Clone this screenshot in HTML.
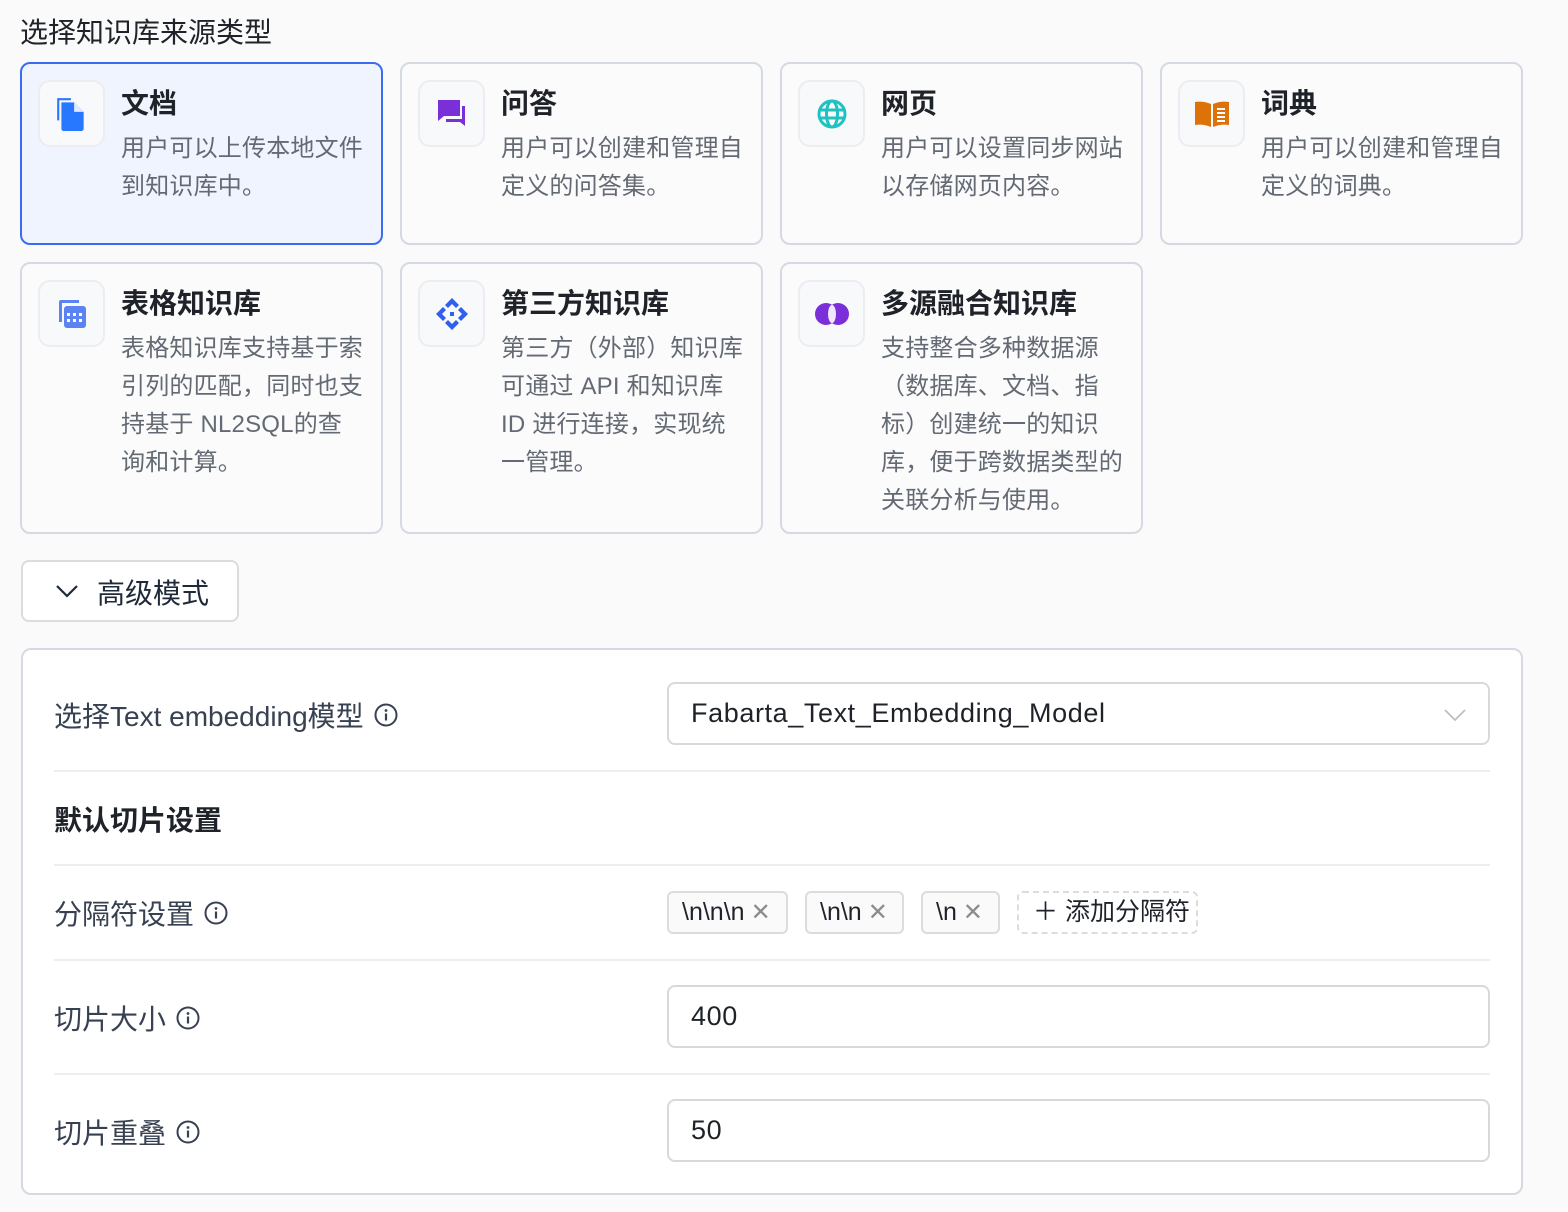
<!DOCTYPE html>
<html><head><meta charset="utf-8">
<style>
*{box-sizing:border-box;margin:0;padding:0}
body{width:1568px;height:1212px;background:#fafafa;font-family:"Liberation Sans","Noto Sans CJK SC",sans-serif;position:relative;overflow:hidden;color:#1f2329}
.h{position:absolute;left:20px;top:11px;font-size:28px;color:#1f2329}
.card{position:absolute;width:363px;border:2px solid #d5d9e2;border-radius:10px;background:#fbfbfc}
.card.sel{border-color:#3a6cf0;background:#f0f4ff}
.ib{position:absolute;left:16px;top:16px;width:67px;height:67px;border:2px solid #ebedf0;border-radius:12px;background:#f8f9fb;display:flex;align-items:center;justify-content:center}
.t{position:absolute;left:99px;top:18px;font-size:28px;font-weight:bold;color:#1f2329}
.d{position:absolute;left:99px;top:66px;width:260px;font-size:24px;line-height:38px;color:#646a73;white-space:nowrap;letter-spacing:0.2px}
.adv{position:absolute;left:21px;top:560px;width:218px;height:62px;border:2px solid #dcdcdc;border-radius:8px;background:#fff;font-size:28px;color:#1f2937}
.panel{position:absolute;left:21px;top:648px;width:1502px;height:547px;border:2px solid #d5d9e2;border-radius:10px;background:#fff}
.lbl{position:absolute;left:31px;font-size:28px;color:#374151;display:flex;align-items:center;gap:10px}
.div{position:absolute;left:31px;width:1436px;height:2px;background:#eceef2}
.inp{position:absolute;left:644px;width:823px;height:63px;border:2px solid #d9d9d9;border-radius:8px;font-size:27px;letter-spacing:0.6px;padding-left:22px;line-height:59px;color:#1f2329}
.tag{position:absolute;top:241px;height:43px;border:2px solid #dcdcdc;border-radius:6px;background:#fafafa;font-size:25px;line-height:39px;padding-left:13px;color:#1f2329}
.tag span{color:#8c8c8c;font-size:24px;margin-left:6px}
</style></head><body>
<div class="h">选择知识库来源类型</div>

<div class="card sel" style="left:20px;top:62px;height:183px">
<div class="ib"><svg width="36" height="36" viewBox="0 0 34 34"><path d="M3 2h13v2H5v19H3z" fill="#2878ff"/><path d="M7 6h12l9 9v16a2 2 0 0 1-2 2H9a2 2 0 0 1-2-2z" fill="#2878ff"/><path d="M19 6v9h9z" fill="#dfe9ff"/></svg></div>
<div class="t">文档</div><div class="d">用户可以上传本地文件<br>到知识库中。</div></div>

<div class="card" style="left:400px;top:62px;height:183px">
<div class="ib"><svg width="34" height="34" viewBox="0 0 34 34"><path d="M3 3h22v16H9l-6 5z" fill="#7a2fd8"/><path d="M27 9h3v20l-5-4H11v-3h16z" fill="#7a2fd8"/></svg></div>
<div class="t">问答</div><div class="d">用户可以创建和管理自<br>定义的问答集。</div></div>

<div class="card" style="left:780px;top:62px;height:183px">
<div class="ib"><svg width="32" height="32" viewBox="0 0 32 32" fill="none" stroke="#1fc1c1" stroke-width="3"><circle cx="16" cy="16" r="13"/><ellipse cx="16" cy="16" rx="5.5" ry="13"/><path d="M3 12h26M3 20h26"/></svg></div>
<div class="t">网页</div><div class="d">用户可以设置同步网站<br>以存储网页内容。</div></div>

<div class="card" style="left:1160px;top:62px;height:183px">
<div class="ib"><svg width="36" height="30" viewBox="0 0 36 30"><path d="M1 3c6-1 11 0 16 2v23c-5-2-10-3-16-2z" fill="#dd7209"/><path d="M19 5c5-2 10-3 16-2v23c-6-1-11 0-16 2z" fill="#dd7209"/><path d="M23 10h8M23 14h8M23 18h8M23 22h8" stroke="#fff" stroke-width="2"/></svg></div>
<div class="t">词典</div><div class="d">用户可以创建和管理自<br>定义的词典。</div></div>

<div class="card" style="left:20px;top:262px;height:272px">
<div class="ib"><svg width="32" height="32" viewBox="0 0 32 32"><path d="M3 4a2 2 0 0 1 2-2h18v3H6v19H3z" fill="#5b84f2"/><rect x="8" y="8" width="22" height="22" rx="3" fill="#5b84f2"/><g fill="#fff"><rect x="11" y="15" width="3" height="3"/><rect x="17" y="15" width="3" height="3"/><rect x="23" y="15" width="3" height="3"/><rect x="11" y="21" width="3" height="3"/><rect x="17" y="21" width="3" height="3"/><rect x="23" y="21" width="3" height="3"/></g></svg></div>
<div class="t">表格知识库</div><div class="d">表格知识库支持基于索<br>引列的匹配，同时也支<br>持基于 NL2SQL的查<br>询和计算。</div></div>

<div class="card" style="left:400px;top:262px;height:272px">
<div class="ib"><svg width="34" height="34" viewBox="0 0 34 34" fill="#2f5ef0"><path d="M17 1l7 7-3 3-4-4-4 4-3-3z"/><path d="M17 33l7-7-3-3-4 4-4-4-3 3z"/><path d="M1 17l7-7 3 3-4 4 4 4-3 3z"/><path d="M33 17l-7-7-3 3 4 4-4 4 3 3z"/><rect x="15" y="15" width="4" height="4"/></svg></div>
<div class="t">第三方知识库</div><div class="d">第三方（外部）知识库<br>可通过 API 和知识库<br>ID 进行连接，实现统<br>一管理。</div></div>

<div class="card" style="left:780px;top:262px;height:272px">
<div class="ib"><svg width="36" height="24" viewBox="0 0 36 24"><circle cx="12" cy="12" r="11" fill="#7a2fd8"/><circle cx="24" cy="12" r="11" fill="#7a2fd8"/><ellipse cx="18" cy="12" rx="4" ry="9" fill="#f0e6ff"/></svg></div>
<div class="t">多源融合知识库</div><div class="d">支持整合多种数据源<br>（数据库、文档、指<br>标）创建统一的知识<br>库，便于跨数据类型的<br>关联分析与使用。</div></div>

<div class="adv"><svg style="position:absolute;left:32px;top:21px" width="24" height="16" viewBox="0 0 24 16"><path d="M2 3l10 10L22 3" fill="none" stroke="#1f2937" stroke-width="2.2"/></svg><span style="position:absolute;left:74px;top:10px">高级模式</span></div>

<div class="panel">
<div class="lbl" style="top:45px">选择Text embedding模型 <svg width="24" height="24" viewBox="0 0 24 24"><circle cx="12" cy="12" r="10.5" fill="none" stroke="#374151" stroke-width="2"/><circle cx="12" cy="7.5" r="1.4" fill="#374151"/><path d="M12 10.5v7" stroke="#374151" stroke-width="2.2"/></svg></div>
<div class="inp" style="top:32px">Fabarta_Text_Embedding_Model<svg style="position:absolute;right:22px;top:24px" width="22" height="14" viewBox="0 0 22 14"><path d="M1 2l10 10L21 2" fill="none" stroke="#bfbfbf" stroke-width="1.8"/></svg></div>
<div class="div" style="top:120px"></div>
<div class="lbl" style="top:149px;font-weight:bold;color:#1f2329">默认切片设置</div>
<div class="div" style="top:214px"></div>
<div class="lbl" style="top:243px">分隔符设置 <svg width="24" height="24" viewBox="0 0 24 24"><circle cx="12" cy="12" r="10.5" fill="none" stroke="#374151" stroke-width="2"/><circle cx="12" cy="7.5" r="1.4" fill="#374151"/><path d="M12 10.5v7" stroke="#374151" stroke-width="2.2"/></svg></div>
<div class="tag" style="left:644px;width:121px">\n\n\n<span>✕</span></div>
<div class="tag" style="left:782px;width:99px">\n\n<span>✕</span></div>
<div class="tag" style="left:898px;width:79px">\n<span>✕</span></div>
<div class="tag" style="left:994px;width:181px;border-style:dashed;background:#fff;padding-left:14px">＋ 添加分隔符</div>
<div class="div" style="top:309px"></div>
<div class="lbl" style="top:348px">切片大小 <svg width="24" height="24" viewBox="0 0 24 24"><circle cx="12" cy="12" r="10.5" fill="none" stroke="#374151" stroke-width="2"/><circle cx="12" cy="7.5" r="1.4" fill="#374151"/><path d="M12 10.5v7" stroke="#374151" stroke-width="2.2"/></svg></div>
<div class="inp" style="top:335px">400</div>
<div class="div" style="top:423px"></div>
<div class="lbl" style="top:462px">切片重叠 <svg width="24" height="24" viewBox="0 0 24 24"><circle cx="12" cy="12" r="10.5" fill="none" stroke="#374151" stroke-width="2"/><circle cx="12" cy="7.5" r="1.4" fill="#374151"/><path d="M12 10.5v7" stroke="#374151" stroke-width="2.2"/></svg></div>
<div class="inp" style="top:449px">50</div>
</div>
</body></html>
